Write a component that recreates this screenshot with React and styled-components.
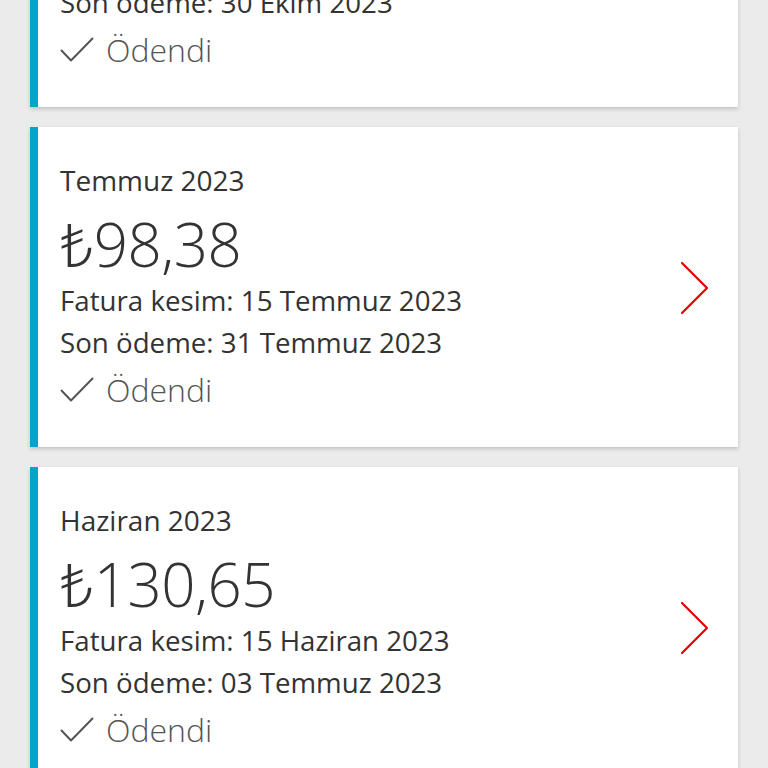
import styled, { createGlobalStyle } from "styled-components";

const GlobalStyle = createGlobalStyle`
  html, body {
    margin: 0;
    padding: 0;
    background: #ebebeb;
    font-family: "Open Sans", "Noto Sans", sans-serif;
    color: #333;
  }
  #root {
    height: 768px;
    overflow: hidden;
  }
`;

const bills = [
  {
    id: "ekim",
    title: "Ekim 2023",
    amount: "₺98,38",
    issued: "15 Ekim 2023",
    due: "30 Ekim 2023",
  },
  {
    id: "temmuz",
    title: "Temmuz 2023",
    amount: "₺98,38",
    issued: "15 Temmuz 2023",
    due: "31 Temmuz 2023",
  },
  {
    id: "haziran",
    title: "Haziran 2023",
    amount: "₺130,65",
    issued: "15 Haziran 2023",
    due: "03 Temmuz 2023",
  },
];

const CheckIcon = () => (
  <svg width="34" height="26" viewBox="0 0 34 26" fill="none">
    <polyline
      points="1.5,13.5 11,23.5 32.5,1.5"
      stroke="#555"
      strokeWidth="2"
      strokeLinecap="round"
      strokeLinejoin="round"
    />
  </svg>
);

const ChevronIcon = () => (
  <svg width="30" height="54" viewBox="0 0 30 54" fill="none">
    <polyline
      points="3,2 28,27 3,52"
      stroke="#e60000"
      strokeWidth="2.2"
      strokeLinecap="round"
      strokeLinejoin="round"
    />
  </svg>
);

const BillCard = ({ bill }) => (
  <Card>
    <Info>
      <Period>{bill.title}</Period>
      <Amount>{bill.amount}</Amount>
      <Detail>Fatura kesim: {bill.issued}</Detail>
      <Detail>Son ödeme: {bill.due}</Detail>
      <Status>
        <CheckIcon />
        <span>Ödendi</span>
      </Status>
    </Info>
    <Arrow>
      <ChevronIcon />
    </Arrow>
  </Card>
);

const App = () => (
  <>
    <GlobalStyle />
    <List>
      {bills.map((bill) => (
        <BillCard key={bill.id} bill={bill} />
      ))}
    </List>
  </>
);

export default App;

// list is scrolled: first card only shows its bottom part
const List = styled.div`
  display: flex;
  flex-direction: column;
  gap: 20px;
  padding: 0 30px;
  margin-top: -213px;
`;

const Card = styled.article`
  display: flex;
  align-items: center;
  background: #fff;
  border-left: 8px solid #00a6c4;
  box-shadow: 0 2px 4px rgba(0, 0, 0, 0.18);
  padding: 29px 29px 28px 22px;
  height: 320px;
  box-sizing: border-box;
`;

const Info = styled.div`
  flex: 1;
  display: flex;
  flex-direction: column;
`;

const Period = styled.div`
  font-size: 28px;
  line-height: 36px;
  color: #333;
`;

const Amount = styled.div`
  font-size: 60px;
  line-height: 70px;
  font-weight: 300;
  color: #333;
  margin-top: 11px;
  letter-spacing: -0.5px;
`;

const Detail = styled.div`
  font-size: 27.7px;
  line-height: 42px;
  color: #333;

  &:first-of-type {
    margin-top: 11px;
  }
`;

const Status = styled.div`
  display: flex;
  align-items: center;
  gap: 12px;
  margin-top: 3px;
  height: 48px;
  font-size: 32px;
  font-weight: 300;
  color: #555;
`;

const Arrow = styled.div`
  display: flex;
  align-items: center;
`;
